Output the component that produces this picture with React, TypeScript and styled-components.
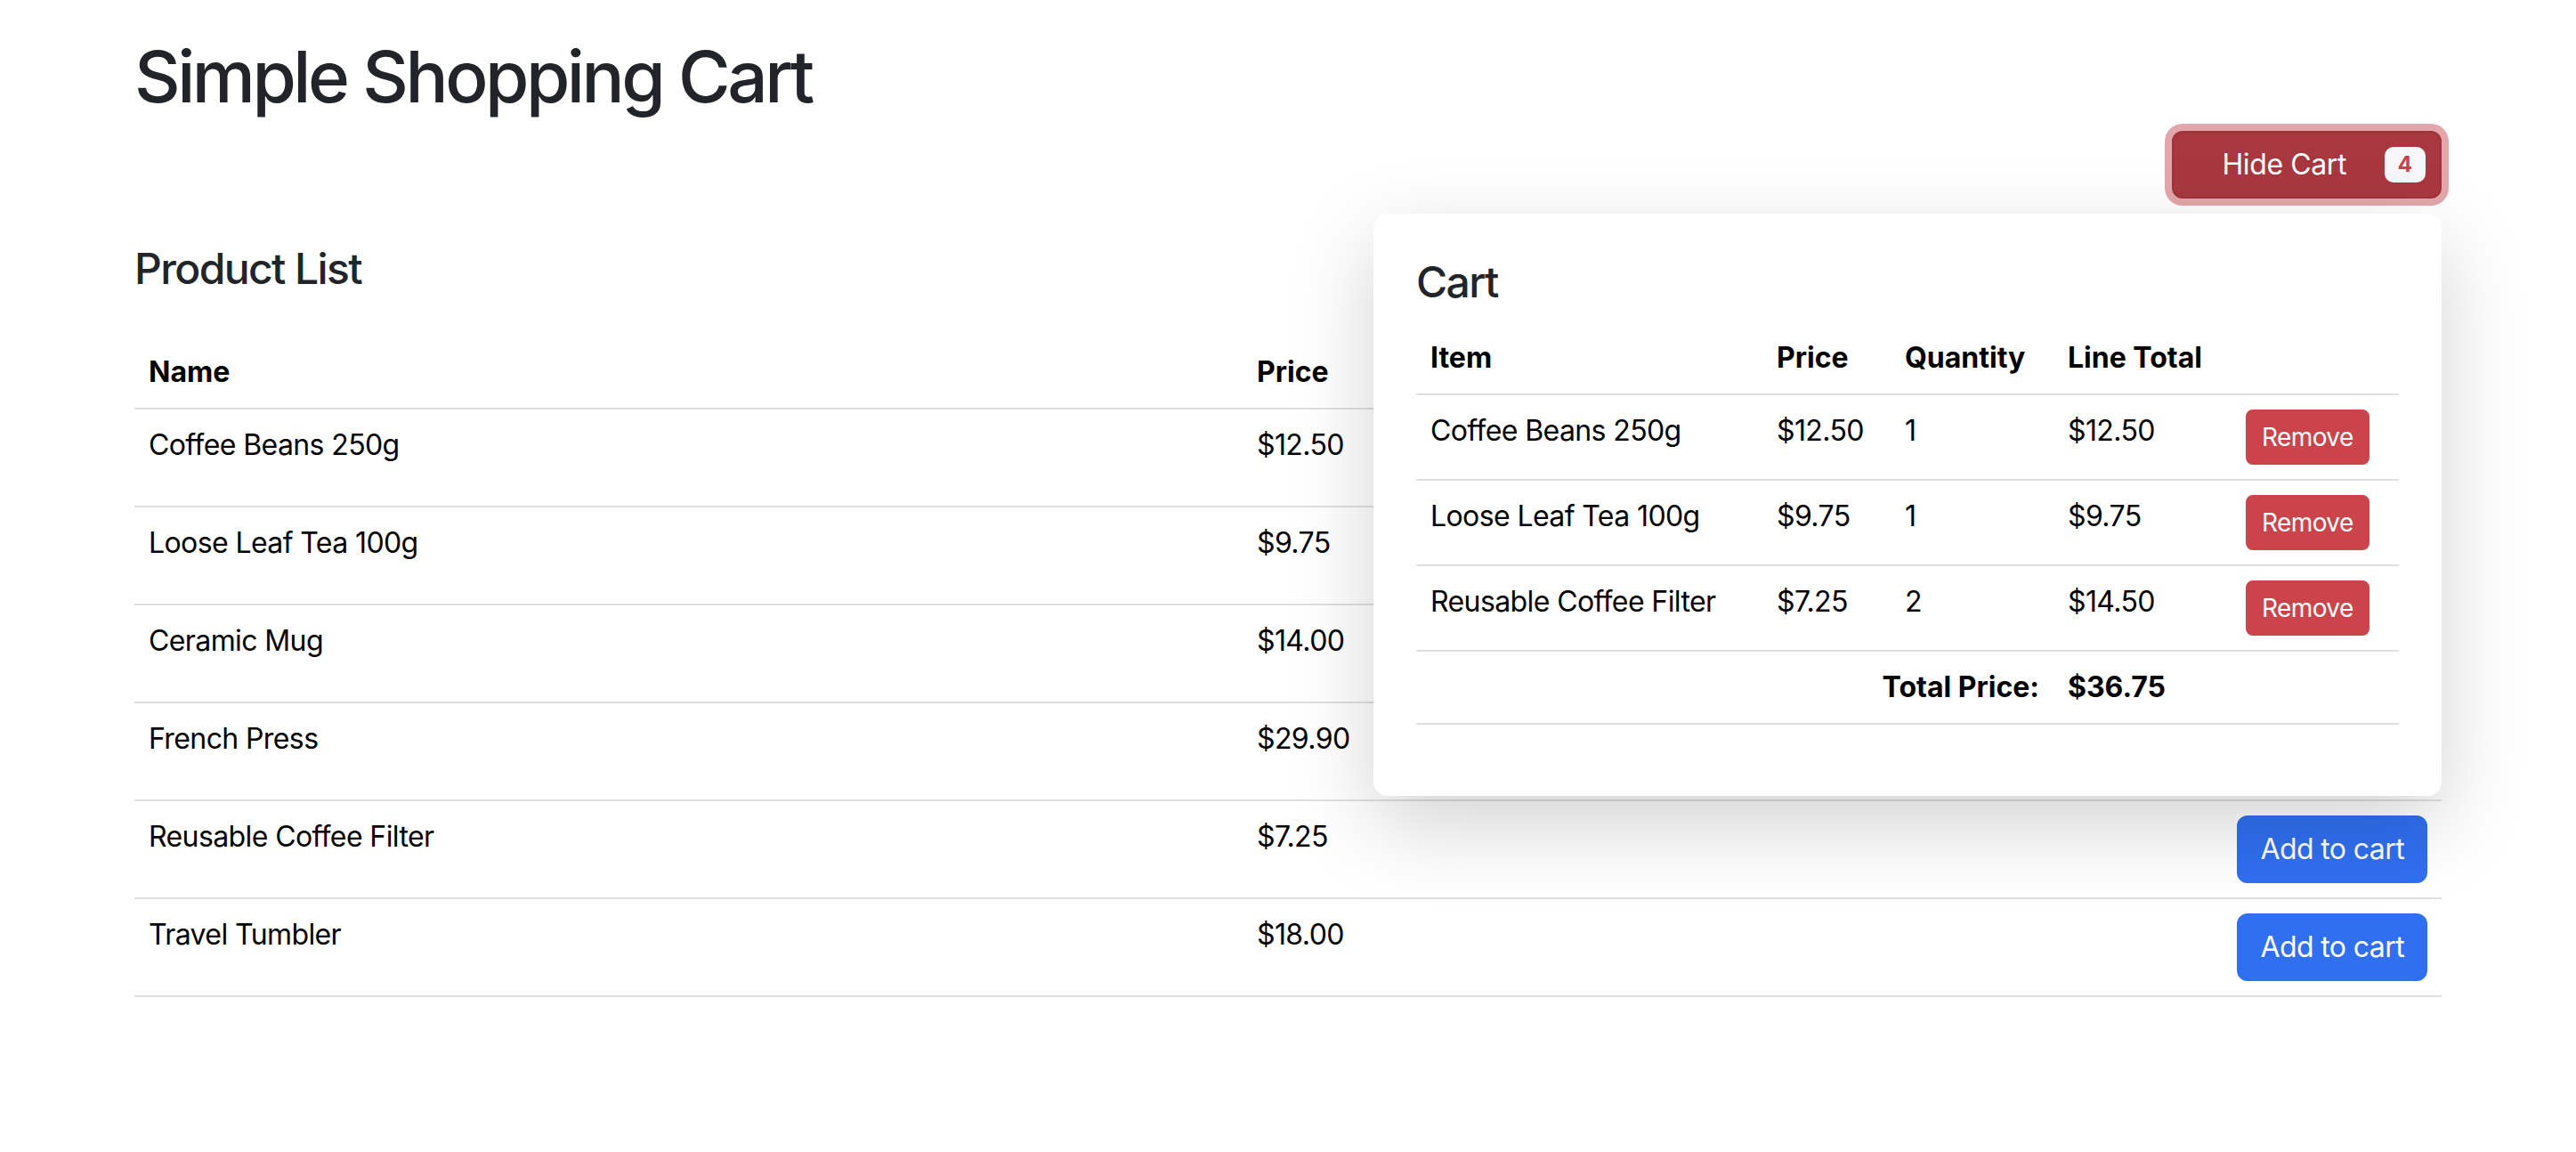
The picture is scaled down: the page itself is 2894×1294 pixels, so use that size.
import React, { useState } from "react";
import styled, { createGlobalStyle } from "styled-components";

interface Product {
  id: number;
  name: string;
  price: number;
}

interface CartLine {
  product: Product;
  quantity: number;
}

const products: Product[] = [
  { id: 1, name: "Coffee Beans 250g", price: 12.5 },
  { id: 2, name: "Loose Leaf Tea 100g", price: 9.75 },
  { id: 3, name: "Ceramic Mug", price: 14.0 },
  { id: 4, name: "French Press", price: 29.9 },
  { id: 5, name: "Reusable Coffee Filter", price: 7.25 },
  { id: 6, name: "Travel Tumbler", price: 18.0 },
];

const GlobalStyle = createGlobalStyle`
  *, *::before, *::after {
    box-sizing: border-box;
  }
  body {
    margin: 0;
    background: #fff;
    color: #212529;
    font-family: Inter, "Noto Sans", "Liberation Sans", sans-serif;
    font-size: 32px;
    line-height: 1.5;
  }
`;

const Page = styled.div`
  max-width: 2640px;
  margin: 0 auto;
  padding: 38px 24px 0;
`;

const Title = styled.h1`
  margin: 0 0 13px;
  font-size: 80px;
  font-weight: 500;
  line-height: 1.2;
  letter-spacing: -3.5px;
`;

const Toolbar = styled.div`
  position: relative;
  display: flex;
  justify-content: flex-end;
`;

const CartToggle = styled.button`
  position: relative;
  height: 76px;
  padding: 12px 105px 12px 54px;
  border: 2px solid #a0333a;
  border-radius: 12px;
  background: #a8383f;
  color: #fff;
  font-family: inherit;
  font-size: 32px;
  line-height: 48px;
  letter-spacing: -0.4px;
  box-shadow: 0 0 0 8px #e3a7ab;
  cursor: pointer;
`;

const CountBadge = styled.span`
  position: absolute;
  right: 16px;
  top: 50%;
  transform: translateY(-50%);
  padding: 8px 15px;
  border-radius: 10px;
  background: #f7f7f9;
  color: #c9414a;
  font-size: 24px;
  font-weight: 700;
  line-height: 1;
  letter-spacing: 0;
`;

const CartPanel = styled.div`
  position: absolute;
  top: calc(100% + 17px);
  right: 0;
  z-index: 10;
  width: 1200px;
  padding: 48px;
  border-radius: 16px;
  background: #fff;
  box-shadow: 0 32px 96px rgba(0, 0, 0, 0.175);
`;

const SectionTitle = styled.h4<{ $gap: number }>`
  margin: 0 0 ${(p) => p.$gap}px;
  font-size: 48px;
  font-weight: 500;
  line-height: 1.2;
  letter-spacing: -1.6px;
`;

const Section = styled.section`
  margin-top: 50px;
`;

const DataTable = styled.table`
  width: 100%;
  margin-bottom: 32px;
  border-collapse: collapse;
  table-layout: fixed;
  color: #000;
`;

const HeadCell = styled.th<{ $width?: number; $align?: "left" | "right" }>`
  width: ${(p) => (p.$width ? `${p.$width}px` : "auto")};
  padding: 16px;
  border-bottom: 2px solid #dfe0e4;
  text-align: ${(p) => p.$align || "left"};
  vertical-align: top;
  font-weight: 700;
`;

const Cell = styled.td<{ $align?: "left" | "right"; $bold?: boolean }>`
  padding: 16px;
  border-bottom: 2px solid #dfe0e4;
  text-align: ${(p) => p.$align || "left"};
  vertical-align: top;
  font-weight: ${(p) => (p.$bold ? 700 : 400)};
  letter-spacing: ${(p) => (p.$bold ? "0" : "-0.6px")};
  white-space: nowrap;
`;

const ActionButton = styled.button<{ $variant: "primary" | "danger"; $small?: boolean }>`
  padding: ${(p) => (p.$small ? "8px 16px" : "12px 24px")};
  border: 2px solid ${(p) => (p.$variant === "primary" ? "#306ff0" : "#cc444b")};
  border-radius: ${(p) => (p.$small ? "8px" : "12px")};
  background: ${(p) => (p.$variant === "primary" ? "#306ff0" : "#cc444b")};
  color: #fff;
  font-family: inherit;
  font-size: ${(p) => (p.$small ? "28px" : "32px")};
  line-height: 1.5;
  letter-spacing: -0.6px;
  cursor: pointer;
`;

const money = (n: number) => `$${n.toFixed(2)}`;

function App() {
  const [showCart, setShowCart] = useState(true);
  const [cart, setCart] = useState<CartLine[]>([
    { product: products[0], quantity: 1 },
    { product: products[1], quantity: 1 },
    { product: products[4], quantity: 2 },
  ]);

  const count = cart.reduce((sum, l) => sum + l.quantity, 0);
  const total = cart.reduce((sum, l) => sum + l.quantity * l.product.price, 0);

  const addToCart = (product: Product) => {
    setCart((lines) => {
      const found = lines.find((l) => l.product.id === product.id);
      if (found) {
        return lines.map((l) =>
          l.product.id === product.id ? { ...l, quantity: l.quantity + 1 } : l
        );
      }
      return [...lines, { product, quantity: 1 }];
    });
  };

  const removeFromCart = (id: number) => {
    setCart((lines) => lines.filter((l) => l.product.id !== id));
  };

  return (
    <>
      <GlobalStyle />
      <Page>
        <Title>Simple Shopping Cart</Title>

        <Toolbar>
          <CartToggle onClick={() => setShowCart(!showCart)}>
            {showCart ? "Hide Cart" : "Show Cart"}
            <CountBadge>{count}</CountBadge>
          </CartToggle>

          {showCart && (
            <CartPanel>
              <SectionTitle $gap={16}>Cart</SectionTitle>
              <DataTable>
                <thead>
                  <tr>
                    <HeadCell $width={389}>Item</HeadCell>
                    <HeadCell $width={144}>Price</HeadCell>
                    <HeadCell $width={183}>Quantity</HeadCell>
                    <HeadCell $width={200}>Line Total</HeadCell>
                    <HeadCell />
                  </tr>
                </thead>
                <tbody>
                  {cart.map((line) => (
                    <tr key={line.product.id}>
                      <Cell>{line.product.name}</Cell>
                      <Cell>{money(line.product.price)}</Cell>
                      <Cell>{line.quantity}</Cell>
                      <Cell>{money(line.product.price * line.quantity)}</Cell>
                      <Cell>
                        <ActionButton
                          $variant="danger"
                          $small
                          onClick={() => removeFromCart(line.product.id)}
                        >
                          Remove
                        </ActionButton>
                      </Cell>
                    </tr>
                  ))}
                  <tr>
                    <Cell colSpan={3} $align="right" $bold>
                      Total Price:
                    </Cell>
                    <Cell $bold>{money(total)}</Cell>
                    <Cell />
                  </tr>
                </tbody>
              </DataTable>
            </CartPanel>
          )}
        </Toolbar>

        <Section>
          <SectionTitle $gap={47}>Product List</SectionTitle>
          <DataTable>
            <thead>
              <tr>
                <HeadCell $width={1245}>Name</HeadCell>
                <HeadCell $width={600}>Price</HeadCell>
                <HeadCell />
              </tr>
            </thead>
            <tbody>
              {products.map((p) => (
                <tr key={p.id}>
                  <Cell>{p.name}</Cell>
                  <Cell>{money(p.price)}</Cell>
                  <Cell $align="right">
                    <ActionButton $variant="primary" onClick={() => addToCart(p)}>
                      Add to cart
                    </ActionButton>
                  </Cell>
                </tr>
              ))}
            </tbody>
          </DataTable>
        </Section>
      </Page>
    </>
  );
}

export default App;
